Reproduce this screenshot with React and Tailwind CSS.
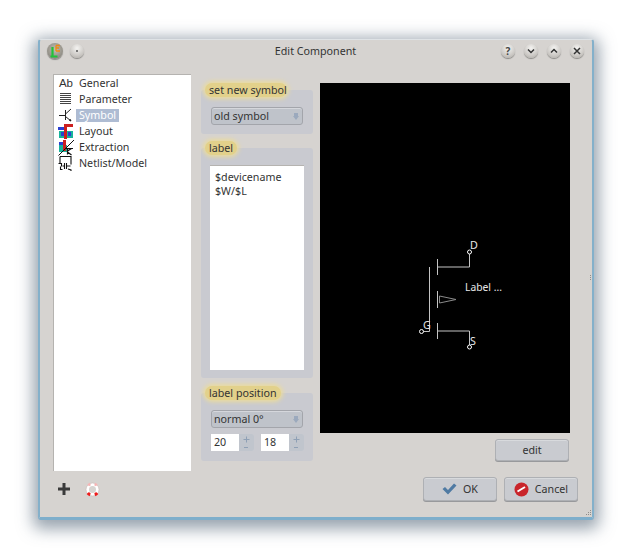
import React from "react";

const TitleButton = ({ children }) => (
  <div className="w-[14px] h-[14px] rounded-full bg-[radial-gradient(circle_at_50%_30%,#f4f3f1,#c9c6c2_65%,#a5a29e)] shadow-[0_1px_1px_#8a8885] flex items-center justify-center">
    {children}
  </div>
);

const Logo = () => (
  <div className="w-[16px] h-[16px] rounded-full bg-[radial-gradient(circle_at_50%_40%,#c4c0b4,#8f8c84_70%,#77746e)] shadow-[0_1px_1px_#8a8885]">
    <svg width="16" height="16" viewBox="0 0 16 16" fill="none">
      <path d="M5.5 4v9M3.5 13.5h7" stroke="#22c23a" strokeWidth="2.2" />
      <path d="M9 2.5v5.5M9 2.5h4M9 5h3M9 8h4" stroke="#ef8a12" strokeWidth="1.3" />
    </svg>
  </div>
);

const icons = {
  general: <span className="font-['Liberation_Sans',sans-serif] text-[11.5px] leading-[14px] text-[#333]">Ab</span>,
  parameter: (
    <svg width="16" height="14" viewBox="0 0 16 14" stroke="#444" strokeWidth="1">
      <path d="M2 1.5h11M2 3.5h11M2 5.5h11M2 7.5h11M2 9.5h11M2 11.5h11" />
    </svg>
  ),
  symbol: (
    <svg width="16" height="16" viewBox="0 0 16 16" stroke="#222" strokeWidth="1" fill="none">
      <path d="M1 8.5h6M7.5 3v10M7.5 7L13 2M7.5 9.5L13 14M11 13l2 1-1-2" />
    </svg>
  ),
  layout: (
    <svg width="16" height="16" viewBox="0 0 16 16">
      <rect x="1" y="8" width="14" height="7" fill="#16b39a" />
      <rect x="0" y="4" width="7" height="3" fill="#2a3fd0" />
      <rect x="3" y="9" width="3" height="4" fill="#2a3fd0" />
      <rect x="6" y="1" width="3" height="15" fill="#cc1f1f" />
      <rect x="8" y="1" width="7" height="3" fill="#cc1f1f" />
      <rect x="10" y="9" width="3" height="4" fill="#2a3fd0" />
    </svg>
  ),
  extraction: (
    <svg width="17" height="17" viewBox="0 0 17 17" fill="none">
      <rect x="1" y="6" width="8" height="7" fill="#16b39a" />
      <rect x="1" y="3" width="5" height="3" fill="#2a3fd0" />
      <rect x="5" y="1" width="3" height="11" fill="#cc1f1f" />
      <path d="M0.5 16.5L16 1" stroke="#111" />
      <path d="M7 9.5h8M9.5 9.5v6M9.5 12l4-2.5M9.5 13l4 3" stroke="#111" strokeWidth="1.2" />
    </svg>
  ),
  netlist: (
    <svg width="16" height="16" viewBox="0 0 16 16" fill="none" stroke="#111" strokeWidth="1.1">
      <path d="M2 1.5h11v8M2 1.5v7M0.5 8.5h3v3M2.5 11.5v3h2M6.5 8v6M6.5 11h-2M8.5 8v6M8.5 11h4M10 14l3 1v1" />
    </svg>
  ),
};

const items = [
  ["General", "general"],
  ["Parameter", "parameter"],
  ["Symbol", "symbol", true],
  ["Layout", "layout"],
  ["Extraction", "extraction"],
  ["Netlist/Model", "netlist"],
];

const Group = ({ label, pill, className, children }) => (
  <div className={className}>
    <div className={`relative z-10 h-[14px] ml-[4px] ${pill} rounded-full bg-[#e2d18b] shadow-[0_0_4px_2px_#eadb9e] pl-[4px] text-[10.7px] leading-[14px] text-[#333] whitespace-nowrap`}>
      {label}
    </div>
    <div className="-mt-[7px] bg-[#c9cad0] rounded-[3px]">{children}</div>
  </div>
);

const Combo = ({ text }) => (
  <div className="h-[18px] w-[92px] rounded-[3px] border border-[#a3a5ab] bg-[#bfc3ca] shadow-[inset_0_1px_0_#d5d7dc] flex items-center justify-between pl-[2px] pr-[3px] text-[10.7px] text-[#333]">
    {text}
    <svg width="6" height="7" viewBox="0 0 6 7" fill="#9ba9bd">
      <path d="M1 0h4v3h1L3 7 0 3h1z" />
    </svg>
  </div>
);

const Spin = ({ value }) => (
  <div className="flex">
    <div className="w-[28px] h-[17px] bg-white pl-[3px] text-[10.7px] leading-[17px] text-[#333]">{value}</div>
    <div className="w-[15px] h-[17px] bg-[#c0c5cd] rounded-r-[3px] flex items-center justify-center">
      <svg width="7" height="15" viewBox="0 0 7 15" stroke="#8fa0b5" strokeWidth="1">
        <path d="M0.5 4.5h6M3.5 1.5v6M1 12.5h4" />
      </svg>
    </div>
  </div>
);

const Button = ({ children, className }) => (
  <button className={`flex items-center justify-center gap-[6px] rounded-[3px] border border-[#aeb0b4] bg-[#c9cbd0] shadow-[0_1px_0_#98999c,inset_0_1px_0_#d8dadd] text-[10.7px] text-[#333] ${className}`}>
    {children}
  </button>
);

const Symbol = () => (
  <svg width="250" height="350" viewBox="320 83 250 350" fill="none" className="block">
    <g stroke="#c4c4c4" strokeWidth="1">
      <path d="M437.5 259v16M437.5 267h32v-13M429.5 267v64.5h-6M437.5 291v17M437.5 323v16M437.5 331h32v14" />
      <path d="M439.5 296l16.5 3.5-16.5 3.5z" stroke="#8a8a8a" />
    </g>
    <g stroke="#fff" strokeWidth="1">
      <circle cx="469.5" cy="252" r="2" />
      <circle cx="421.5" cy="331.5" r="2" />
      <circle cx="469.5" cy="347" r="2" />
    </g>
    <g fill="#e8e8e8" fontSize="10.7" fontFamily="'Noto Sans', sans-serif">
      <text x="470" y="249">D</text>
      <text x="423" y="329">G</text>
      <text x="470" y="345">S</text>
      <text x="465" y="291" fontSize="10.3">Label ...</text>
    </g>
  </svg>
);

export default function App() {
  return (
    <div className="w-[632px] h-[557px] bg-white pt-[39px] pl-[38px] font-['Noto_Sans',sans-serif]">
      <div className="relative w-[556px] h-[481px] bg-[#d6d3d0] rounded-[3px] border-x-2 border-b-[3px] border-x-[#84b0ca] border-b-[#7eaecb] border-t border-t-[#dfe3e6] shadow-[0_4px_16px_5px_rgba(70,90,110,0.55)]">
        <div className="h-[22px] flex items-center pl-[7px] pr-[8px]">
          <div className="flex items-center gap-[7px] w-[100px]">
            <Logo />
            <TitleButton>
              <div className="w-[2px] h-[2px] rounded-full bg-[#555]" />
            </TitleButton>
          </div>
          <div className="flex-1 text-center text-[10.7px] text-[#333]">Edit Component</div>
          <div className="flex items-center justify-end gap-[9px] w-[100px]">
            <TitleButton>
              <span className="text-[10px] leading-[14px] font-bold text-[#444]">?</span>
            </TitleButton>
            <TitleButton>
              <svg width="8" height="8" viewBox="0 0 8 8" fill="none" stroke="#333" strokeWidth="1.5"><path d="M1 2.5l3 3 3-3" /></svg>
            </TitleButton>
            <TitleButton>
              <svg width="8" height="8" viewBox="0 0 8 8" fill="none" stroke="#333" strokeWidth="1.5"><path d="M1 5.5l3-3 3 3" /></svg>
            </TitleButton>
            <TitleButton>
              <svg width="8" height="8" viewBox="0 0 8 8" fill="none" stroke="#333" strokeWidth="1.5"><path d="M1 1l6 6M7 1L1 7" /></svg>
            </TitleButton>
          </div>
        </div>

        <div className="flex pl-[13px] pt-[12px]">
          <div className="w-[138px] h-[397px] bg-white border-t border-l border-[#b5b3b0] pl-[3px]">
            {items.map(([name, icon, selected]) => (
              <div key={name} className="h-[16px] flex items-center text-[10.7px] text-[#333]">
                <div className="w-[18px] h-[16px] flex items-center justify-center shrink-0">{icons[icon]}</div>
                <span className={selected ? "ml-[1px] px-[3px] bg-[#aebcd3] text-white leading-[13px]" : "ml-[4px]"}>{name}</span>
              </div>
            ))}
          </div>

          <div className="w-[112px] ml-[10px] pt-[9px]">
            <Group label="set new symbol" pill="w-[82px]">
              <div className="pt-[17px] pl-[10px] h-[44px]">
                <Combo text="old symbol" />
              </div>
            </Group>
            <Group label="label" pill="w-[32px]" className="mt-[7px]">
              <div className="h-[230px] pt-[17px] pl-[9px]">
                <div className="w-[94px] h-[205px] bg-white border-t border-[#b5b3b0] pt-[4px] pl-[5px] text-[10.7px] leading-[14px] text-[#333]">
                  <div>$devicename</div>
                  <div>$W/$L</div>
                </div>
              </div>
            </Group>
            <Group label="label position" pill="w-[76px]" className="mt-[8px]">
              <div className="h-[68px] pt-[17px] pl-[10px]">
                <Combo text="normal 0°" />
                <div className="flex gap-[7px] mt-[6px]">
                  <Spin value="20" />
                  <Spin value="18" />
                </div>
              </div>
            </Group>
          </div>

          <div className="w-[250px] ml-[7px] pt-[9px]">
            <div className="w-[250px] h-[350px] bg-black">
              <Symbol />
            </div>
            <div className="flex justify-end mt-[6px] pr-[1px]">
              <Button className="w-[74px] h-[22px]">edit</Button>
            </div>
          </div>
        </div>

        <div className="absolute left-0 right-0 top-[437px] flex items-center pl-[17px] pr-[14px]">
          <div className="flex items-center gap-[14px] flex-1">
            <svg width="14" height="14" viewBox="0 0 14 14" fill="#3a3a3a">
              <path d="M5.5 1h3v4.5H13v3H8.5V13h-3V8.5H1v-3h4.5z" />
            </svg>
            <svg width="15" height="15" viewBox="0 0 15 15" fill="none">
              <circle cx="7.5" cy="7.5" r="5" stroke="#fff" strokeWidth="3" />
              <circle cx="7.5" cy="7.5" r="6.5" stroke="#c9b9b7" strokeWidth="0.6" />
              <path d="M2.8 11a6 6 0 0 0 2.4 1.8M12.2 11a6 6 0 0 1-2.4 1.8" stroke="#ee1c1c" strokeWidth="3" />
              <path d="M3.2 3.5a6 6 0 0 1 2.2-1.5M11.8 3.5a6 6 0 0 0-2.2-1.5" stroke="#f5b5b5" strokeWidth="2.5" />
            </svg>
          </div>
          <div className="flex gap-[7px]">
            <Button className="w-[74px] h-[24px]">
              <svg width="15" height="12" viewBox="0 0 15 12" fill="#4f7aa3">
                <path d="M0.5 6l2.5-2 3 3 6-6.5 2.5 2-8.5 9z" />
              </svg>
              OK
            </Button>
            <Button className="w-[74px] h-[24px]">
              <svg width="15" height="15" viewBox="0 0 15 15">
                <circle cx="7.5" cy="7.5" r="7" fill="#c9252b" />
                <path d="M3.5 9.5L11 5" stroke="#fff" strokeWidth="2" />
              </svg>
              Cancel
            </Button>
          </div>
        </div>

        <svg width="6" height="6" viewBox="0 0 6 6" fill="#8f8d8a" className="absolute right-[0px] bottom-[1px]">
          <path d="M4 0h1v1H4zM2 2h1v1H2zM4 2h1v1H4zM0 4h1v1H0zM2 4h1v1H2zM4 4h1v1H4z" />
        </svg>
        <svg width="2" height="6" viewBox="0 0 2 6" fill="#8f8d8a" className="absolute right-[0px] top-[235px]">
          <path d="M0 0h1v1H0zM0 2h1v1H0zM0 4h1v1H0z" />
        </svg>
      </div>
    </div>
  );
}
